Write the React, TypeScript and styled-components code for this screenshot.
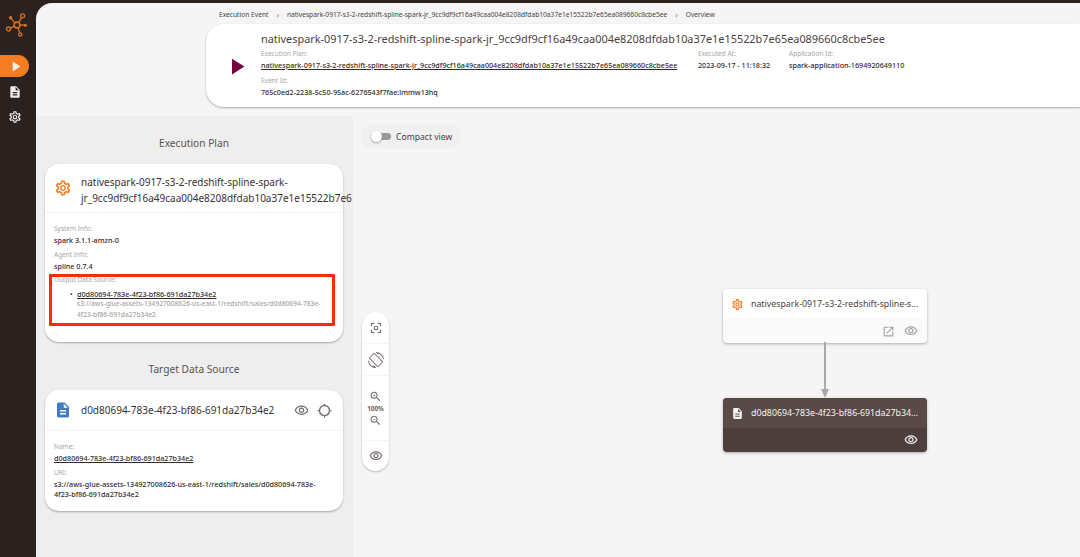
import React from 'react';
import styled, { createGlobalStyle } from 'styled-components';
import {
  MdPlayArrow,
  MdDescription,
  MdOutlineSettings,
  MdOutlineCenterFocusWeak,
  MdOutlineScreenRotation,
  MdOutlineZoomIn,
  MdOutlineZoomOut,
  MdOutlineVisibility,
  MdOutlineGpsNotFixed,
  MdOutlineOpenInNew,
} from 'react-icons/md';

const PLAN_NAME = 'nativespark-0917-s3-2-redshift-spline-spark-jr_9cc9df9cf16a49caa004e8208dfdab10a37e1e15522b7e65ea089660c8cbe5ee';
const DS_NAME = 'd0d80694-783e-4f23-bf86-691da27b34e2';
const DS_URI = 's3://aws-glue-assets-134927008626-us-east-1/redshift/sales/d0d80694-783e-4f23-bf86-691da27b34e2';

const GlobalStyle = createGlobalStyle`
  html, body {
    margin: 0;
    padding: 0;
    height: 100%;
    overflow: hidden;
  }
  body {
    font-family: "Noto Sans", "Open Sans", sans-serif;
    color: #3a3231;
  }
`;

const Shell = styled.div`
  display: flex;
  width: 1080px;
  height: 557px;
  background: #2b2220;
  padding-top: 3px;
  box-sizing: border-box;
  overflow: hidden;
`;

const Sidebar = styled.nav`
  width: 36px;
  flex: none;
  display: flex;
  flex-direction: column;
  align-items: flex-start;
`;

const Logo = styled.div`
  height: 52px;
  width: 36px;
  padding-top: 9px;
  padding-left: 5px;
  box-sizing: border-box;
`;

const NavItem = styled.div<{ $active?: boolean }>`
  width: 29px;
  height: ${(p) => (p.$active ? '22px' : '25px')};
  margin-bottom: ${(p) => (p.$active ? '2px' : '0')};
  display: flex;
  align-items: center;
  justify-content: center;
  padding-left: 1px;
  box-sizing: border-box;
  background: ${(p) => (p.$active ? '#f57c20' : 'transparent')};
  border-radius: 0 11px 11px 0;
  color: #f2efee;
`;

const Main = styled.main`
  flex: 1;
  display: flex;
  flex-direction: column;
  background: #f5f5f5;
  border-top-left-radius: 16px;
  overflow: hidden;
`;

const Head = styled.header`
  height: 113px;
  flex: none;
  padding-left: 170px;
  box-sizing: border-box;
  display: flex;
  flex-direction: column;
`;

const Breadcrumb = styled.div`
  height: 21px;
  display: flex;
  align-items: center;
  gap: 8px;
  padding-left: 13px;
  padding-top: 1px;
  box-sizing: border-box;
  font-size: 6.65px;
  color: #4d4442;
  white-space: nowrap;
`;

const Crumb = styled.span``;

const Chevron = styled.span`
  color: #8c8482;
  font-size: 8px;
`;

const HeadCard = styled.section`
  height: 83px;
  background: #fff;
  border-radius: 18px 0 0 18px;
  box-shadow: 0 1px 2px rgba(0, 0, 0, 0.3);
  display: flex;
`;

const PlayBox = styled.div`
  width: 55px;
  flex: none;
  display: flex;
  align-items: center;
  justify-content: center;
  color: #78003c;
  padding-left: 6px;
  padding-top: 1px;
  box-sizing: border-box;
`;

const HeadBody = styled.div`
  flex: 1;
  padding-top: 6px;
`;

const HeadTitle = styled.div`
  font-size: 10.9px;
  line-height: 18px;
  color: #4a4140;
  white-space: nowrap;
  margin-bottom: 1px;
`;

const MetaRow = styled.div`
  display: flex;
`;

const MetaCol = styled.div<{ $w?: number }>`
  width: ${(p) => (p.$w ? `${p.$w}px` : 'auto')};
  flex: none;
`;

const Label = styled.div`
  font-size: 6.5px;
  line-height: 10px;
  color: #aaa5a4;
  white-space: nowrap;
`;

const Value = styled.div<{ $link?: boolean; $muted?: boolean }>`
  font-size: ${(p) => (p.$muted ? '6.7px' : '7.2px')};
  line-height: ${(p) => (p.$muted ? '11px' : '10.5px')};
  font-weight: 500;
  color: ${(p) => (p.$muted ? '#a9a4a3' : '#322a29')};
  text-decoration: ${(p) => (p.$link ? 'underline' : 'none')};
  margin-top: 1px;
  margin-bottom: 5px;
`;

const Content = styled.div`
  flex: 1;
  display: flex;
  min-height: 0;
`;

const LeftPanel = styled.aside`
  width: 318px;
  flex: none;
  background: #eeeeee;
  border-right: 1px solid #f9f9f9;
  padding: 0 9px;
  box-sizing: border-box;
`;

const PanelTitle = styled.h2`
  margin: 0;
  height: 48px;
  display: flex;
  align-items: center;
  justify-content: center;
  padding-top: 5px;
  padding-right: 1px;
  box-sizing: border-box;
  font-size: 10.2px;
  font-weight: 400;
  color: #5a5250;
`;

const Card = styled.section<{ $h: number }>`
  width: 298px;
  height: ${(p) => p.$h}px;
  background: #fff;
  border-radius: 14px;
  box-shadow: 0 1px 2px rgba(0, 0, 0, 0.3);
  box-sizing: border-box;
`;

const CardHead = styled.div<{ $h: number }>`
  height: ${(p) => p.$h}px;
  display: flex;
  align-items: center;
  padding: 0 11px 0 9px;
  gap: 9px;
  border-bottom: 1px solid #f4f4f4;
  box-sizing: border-box;
`;

const CardTitle = styled.div<{ $wrap?: boolean }>`
  flex: 1;
  font-size: 10px;
  line-height: 16px;
  padding-top: ${(p) => (p.$wrap ? '3px' : '0')};
  color: #3a3231;
  min-width: 0;
  white-space: ${(p) => (p.$wrap ? 'normal' : 'nowrap')};
`;

const Overflowing = styled.span`
  display: block;
  white-space: nowrap;
`;

const CardActions = styled.div`
  display: flex;
  gap: 8px;
  color: #75696a;
`;

const CardBody = styled.div<{ $top: number }>`
  padding: ${(p) => p.$top}px 16px 0 9px;

  ${Value} {
    margin-bottom: 4px;
  }
`;

const Highlight = styled.div`
  position: relative;
  margin-top: 1px;
`;

const RedBox = styled.div`
  position: absolute;
  left: -5px;
  top: -1px;
  width: 286px;
  height: 52px;
  border: 3px solid #fb2a0c;
  box-sizing: border-box;
  pointer-events: none;
`;

const SourceItem = styled.div`
  position: relative;
  margin-top: 4px;
  padding-left: 23px;

  &::before {
    content: '•';
    position: absolute;
    left: 16px;
    top: 1px;
    font-size: 7px;
    line-height: 10px;
    color: #322a29;
  }
`;

const SourceUri = styled.div`
  padding-left: 23px;
  margin-top: -6px;
`;

const Canvas = styled.div`
  flex: 1;
  position: relative;
  background: #f5f5f5;
`;

const CompactPill = styled.div`
  position: absolute;
  left: 7px;
  top: 8px;
  height: 25px;
  width: 100px;
  border-radius: 13px;
  background: #f0f0f0;
  display: flex;
  align-items: center;
  gap: 5px;
  padding-left: 10px;
  box-sizing: border-box;
  font-size: 8.6px;
  color: #4a4140;
`;

const SwitchTrack = styled.span`
  position: relative;
  width: 20px;
  height: 7px;
  border-radius: 4px;
  background: #9a9a9a;
`;

const SwitchThumb = styled.span`
  position: absolute;
  left: 0;
  top: -2px;
  width: 11px;
  height: 11px;
  border-radius: 50%;
  background: #fff;
  box-shadow: 0 1px 2px rgba(0, 0, 0, 0.35);
`;

const Toolbar = styled.div`
  position: absolute;
  left: 8px;
  top: 196px;
  width: 27px;
  background: #fff;
  border-radius: 14px;
  box-shadow: 0 1px 2px rgba(0, 0, 0, 0.25);
  display: flex;
  flex-direction: column;
  color: #7b6f6d;
`;

const ToolGroup = styled.div<{ $h: number }>`
  height: ${(p) => p.$h}px;
  display: flex;
  flex-direction: column;
  align-items: center;
  justify-content: center;
  border-bottom: 1px solid #f4f4f4;
  box-sizing: border-box;
  &:last-child {
    border-bottom: 0;
  }
`;

const ZoomText = styled.div`
  font-size: 6.4px;
  font-weight: 700;
  line-height: 11px;
  color: #6c5f5c;
`;

const Node = styled.div<{ $dark?: boolean; $top: number }>`
  position: absolute;
  left: 369px;
  top: ${(p) => p.$top}px;
  width: 204px;
  height: 54px;
  border-radius: 4px;
  overflow: hidden;
  box-shadow: 0 1px 3px rgba(0, 0, 0, 0.3);
  background: ${(p) => (p.$dark ? '#4d3f3d' : '#fafafa')};
  color: ${(p) => (p.$dark ? '#f5f2f1' : '#4a4140')};
`;

const NodeHead = styled.div<{ $dark?: boolean }>`
  height: 30px;
  display: flex;
  align-items: center;
  gap: 7px;
  padding: 0 8px;
  background: ${(p) => (p.$dark ? '#5a4a47' : '#fff')};
  box-sizing: border-box;
`;

const NodeTitle = styled.div`
  flex: 1;
  min-width: 0;
  font-size: 8.8px;
  overflow: hidden;
  white-space: nowrap;
  text-overflow: ellipsis;
`;

const NodeFoot = styled.div<{ $dark?: boolean }>`
  height: 24px;
  display: flex;
  align-items: center;
  justify-content: flex-end;
  gap: 9px;
  padding-right: 9px;
  color: ${(p) => (p.$dark ? '#f5f2f1' : '#a6a09e')};
`;

const Edge = styled.svg`
  position: absolute;
  left: 465px;
  top: 226px;
`;

const LogoMark = () => (
  <svg width="26" height="26" viewBox="0 0 26 26" fill="none" stroke="#d9701f" strokeWidth="1.3">
    <circle cx="12" cy="13" r="2.9" strokeWidth="1.6" />
    <circle cx="17.6" cy="3.8" r="2" />
    <circle cx="3.5" cy="17" r="2" />
    <circle cx="15.3" cy="22.4" r="1.6" />
    <path d="M13.6 10.6 16.6 5.6M9.4 14.3 5.3 16.2M13 16 14.8 20.8M9.8 10.9 6.2 6.6M14.8 13 19.5 13.2" />
    <circle cx="5.6" cy="5.8" r="1.1" fill="#d9701f" />
    <circle cx="20.3" cy="13.3" r="1" fill="#d9701f" />
  </svg>
);

export default function App() {
  return (
    <>
      <GlobalStyle />
      <Shell>
        <Sidebar>
          <Logo>
            <LogoMark />
          </Logo>
          <NavItem $active>
            <MdPlayArrow size={17} />
          </NavItem>
          <NavItem>
            <MdDescription size={14} />
          </NavItem>
          <NavItem>
            <MdOutlineSettings size={14} />
          </NavItem>
        </Sidebar>

        <Main>
          <Head>
            <Breadcrumb>
              <Crumb>Execution Event</Crumb>
              <Chevron>›</Chevron>
              <Crumb>{PLAN_NAME}</Crumb>
              <Chevron>›</Chevron>
              <Crumb>Overview</Crumb>
            </Breadcrumb>
            <HeadCard>
              <PlayBox>
                <MdPlayArrow size={27} />
              </PlayBox>
              <HeadBody>
                <HeadTitle>{PLAN_NAME}</HeadTitle>
                <MetaRow>
                  <MetaCol $w={437}>
                    <Label>Execution Plan:</Label>
                    <Value $link>{PLAN_NAME}</Value>
                    <Label>Event Id:</Label>
                    <Value>765c0ed2-2238-5c50-95ac-6276543f7fae:lmmw13hq</Value>
                  </MetaCol>
                  <MetaCol $w={91}>
                    <Label>Executed At:</Label>
                    <Value>2023-09-17 - 11:18:32</Value>
                  </MetaCol>
                  <MetaCol>
                    <Label>Application Id:</Label>
                    <Value>spark-application-1694920649110</Value>
                  </MetaCol>
                </MetaRow>
              </HeadBody>
            </HeadCard>
          </Head>

          <Content>
            <LeftPanel>
              <PanelTitle>Execution Plan</PanelTitle>
              <Card $h={178}>
                <CardHead $h={49}>
                  <MdOutlineSettings size={18} color="#f57c20" />
                  <CardTitle $wrap>
                    nativespark-0917-s3-2-redshift-spline-spark-
                    <Overflowing>jr_9cc9df9cf16a49caa004e8208dfdab10a37e1e15522b7e6</Overflowing>
                  </CardTitle>
                </CardHead>
                <CardBody $top={11}>
                  <Label>System Info:</Label>
                  <Value>spark 3.1.1-amzn-0</Value>
                  <Label>Agent Info:</Label>
                  <Value>spline 0.7.4</Value>
                  <Highlight>
                    <RedBox />
                    <Label>Output Data Source:</Label>
                    <SourceItem>
                      <Value $link>{DS_NAME}</Value>
                    </SourceItem>
                    <SourceUri>
                      <Value $muted>{DS_URI}</Value>
                    </SourceUri>
                  </Highlight>
                </CardBody>
              </Card>

              <PanelTitle>Target Data Source</PanelTitle>
              <Card $h={121}>
                <CardHead $h={41}>
                  <MdDescription size={18} color="#3f7cc4" />
                  <CardTitle>{DS_NAME}</CardTitle>
                  <CardActions>
                    <MdOutlineVisibility size={15} />
                    <MdOutlineGpsNotFixed size={15} />
                  </CardActions>
                </CardHead>
                <CardBody $top={11}>
                  <Label>Name:</Label>
                  <Value $link>{DS_NAME}</Value>
                  <Label>URI:</Label>
                  <Value>{DS_URI}</Value>
                </CardBody>
              </Card>
            </LeftPanel>

            <Canvas>
              <CompactPill>
                <SwitchTrack>
                  <SwitchThumb />
                </SwitchTrack>
                Compact view
              </CompactPill>

              <Toolbar>
                <ToolGroup $h={32}>
                  <MdOutlineCenterFocusWeak size={14} />
                </ToolGroup>
                <ToolGroup $h={32}>
                  <MdOutlineScreenRotation size={16} />
                </ToolGroup>
                <ToolGroup $h={65}>
                  <MdOutlineZoomIn size={13} />
                  <ZoomText>100%</ZoomText>
                  <MdOutlineZoomOut size={13} />
                </ToolGroup>
                <ToolGroup $h={30}>
                  <MdOutlineVisibility size={14} />
                </ToolGroup>
              </Toolbar>

              <Node $top={173}>
                <NodeHead>
                  <MdOutlineSettings size={13} color="#f57c20" />
                  <NodeTitle>{PLAN_NAME}</NodeTitle>
                </NodeHead>
                <NodeFoot>
                  <MdOutlineOpenInNew size={13} />
                  <MdOutlineVisibility size={14} />
                </NodeFoot>
              </Node>

              <Edge width="12" height="56" viewBox="0 0 12 56">
                <path d="M6 0V48" stroke="#a8a8a8" strokeWidth="2" />
                <path d="M2 47h8l-4 9z" fill="#a8a8a8" />
              </Edge>

              <Node $dark $top={282}>
                <NodeHead $dark>
                  <MdDescription size={13} />
                  <NodeTitle>{DS_NAME}</NodeTitle>
                </NodeHead>
                <NodeFoot $dark>
                  <MdOutlineVisibility size={14} />
                </NodeFoot>
              </Node>
            </Canvas>
          </Content>
        </Main>
      </Shell>
    </>
  );
}
